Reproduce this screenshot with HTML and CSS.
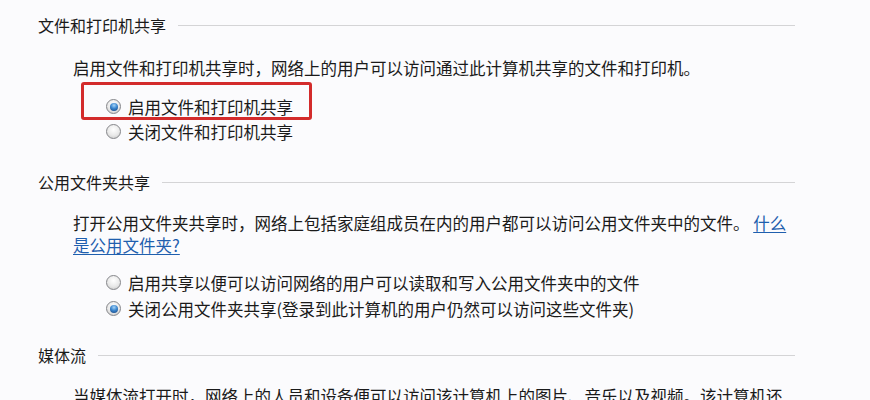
FILE: index.html
```html
<!DOCTYPE html>
<html lang="zh-CN">
<head>
<meta charset="utf-8">
<title>文件和打印机共享</title>
<link rel="stylesheet" href="styles.css">
</head>
<body>
<div class="page">
  <section class="sec sec-1">
    <div class="head"><span class="head-text">文件和打印机共享</span><span class="rule"></span></div>
    <p class="desc">启用文件和打印机共享时，网络上的用户可以访问通过此计算机共享的文件和打印机。</p>
    <div class="radios">
      <div class="radio-row highlighted"><span class="radio checked"></span><span class="label">启用文件和打印机共享</span></div>
      <div class="radio-row"><span class="radio"></span><span class="label">关闭文件和打印机共享</span></div>
    </div>
  </section>
  <section class="sec sec-2">
    <div class="head"><span class="head-text">公用文件夹共享</span><span class="rule"></span></div>
    <p class="desc wrap">打开公用文件夹共享时，网络上包括家庭组成员在内的用户都可以访问公用文件夹中的文件。 <a class="link" href="#"><span class="nb">什么</span>是公用文件夹?</a></p>
    <div class="radios radios-2">
      <div class="radio-row"><span class="radio"></span><span class="label">启用共享以便可以访问网络的用户可以读取和写入公用文件夹中的文件</span></div>
      <div class="radio-row"><span class="radio checked"></span><span class="label">关闭公用文件夹共享(登录到此计算机的用户仍然可以访问这些文件夹)</span></div>
    </div>
  </section>
  <section class="sec sec-3">
    <div class="head"><span class="head-text">媒体流</span><span class="rule"></span></div>
    <p class="desc wrap">当媒体流打开时，网络上的人员和设备便可以访问该计算机上的图片、音乐以及视频。该计算机还可以在网络上查找媒体。</p>
  </section>
</div>
</body>
</html>
```
FILE: styles.css
```css
html, body {
  margin: 0;
  padding: 0;
  background: #fbfbfd;
  overflow: hidden;
}
.page {
  width: 870px;
  height: 400px;
  overflow: hidden;
  padding: 14px 0 0 38px;
  box-sizing: border-box;
  font-family: "Noto Sans CJK SC", "Noto Sans", sans-serif;
  color: #1a1a1a;
}
.head {
  display: flex;
  align-items: center;
  width: 757px;
  height: 22px;
  font-size: 16px;
  line-height: 22px;
  gap: 12px;
}
.head-text {
  white-space: nowrap;
}
.rule {
  flex: 1;
  height: 1px;
  background: #d4d4d6;
}
.desc {
  margin: 21px 0 0 35px;
  font-size: 16.5px;
  line-height: 22px;
  white-space: nowrap;
}
.desc.wrap {
  white-space: normal;
  width: 716px;
}
.sec-2 .desc {
  margin-top: 19px;
}
.nb {
  white-space: nowrap;
}
.link {
  color: #1f5fae;
  text-decoration: underline;
  text-underline-offset: 2px;
}
.radios {
  margin: 15px 0 0 68px;
  display: flex;
  flex-direction: column;
}
.radios-2 {
  margin-top: 14px;
  gap: 1px;
}
.radio-row {
  display: flex;
  align-items: center;
  gap: 7px;
  height: 25px;
  font-size: 16.5px;
  position: relative;
}
.radio {
  width: 13px;
  height: 13px;
  border-radius: 50%;
  border: 1px solid #85868a;
  background: radial-gradient(circle at 50% 35%, #ffffff 0%, #e9e9e9 55%, #c2c2c2 100%);
  position: relative;
  flex: none;
}
.radio.checked::after {
  content: "";
  position: absolute;
  left: 2.5px;
  top: 2.5px;
  width: 8px;
  height: 8px;
  border-radius: 50%;
  background: radial-gradient(circle at 50% 30%, #a6d4f7 0%, #3a86cf 45%, #173f78 100%);
}
.label {
  white-space: nowrap;
}
.highlighted::before {
  content: "";
  position: absolute;
  left: -25px;
  top: -12px;
  width: 231px;
  height: 38px;
  box-sizing: border-box;
  border: 3px solid #d32b2b;
  border-radius: 3px;
}
.sec-2 {
  margin-top: 27px;
}
.sec-3 {
  margin-top: 23px;
}
.sec-3 .desc {
  margin-top: 19px;
}
```
